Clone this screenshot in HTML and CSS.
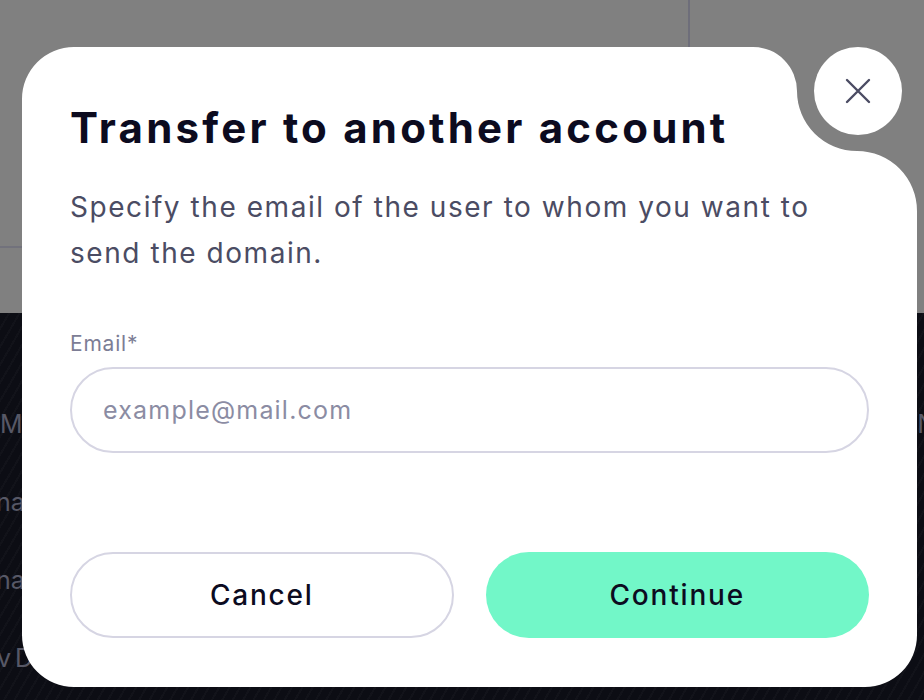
FILE: index.html
```html
<!DOCTYPE html>
<html lang="en">
<head>
<meta charset="utf-8">
<title>Transfer to another account</title>
<link rel="stylesheet" href="styles.css">
</head>
<body>
<div class="page">
  <div class="page-top">
    <div class="cell cell-a"></div>
    <div class="cell cell-b"></div>
    <div class="cell"></div>
    <div class="cell"></div>
  </div>
  <div class="page-bottom">
    <div class="side-row"><span class="side-text">MA</span><span class="side-text shift-n">N</span></div>
    <div class="side-row"><span class="side-text shift-na">na</span></div>
    <div class="side-row"><span class="side-text shift-na">na</span></div>
    <div class="side-row"><span class="side-text shift-vd">v D</span></div>
  </div>

  <div class="modal-wrap">
    <div class="modal">
      <h1 class="title">Transfer to another account</h1>
      <p class="desc">Specify the email of the user to whom you want to send the domain.</p>
      <label class="field">
        <span class="label">Email*</span>
        <input class="input" type="email" placeholder="example@mail.com">
      </label>
      <div class="actions">
        <button class="btn btn-cancel" type="button">Cancel</button>
        <button class="btn btn-continue" type="button">Continue</button>
      </div>
    </div>
    <button class="close" type="button" aria-label="Close">
      <svg width="26" height="26" viewBox="0 0 26 26" fill="none" stroke="#4b4c63" stroke-width="2.4" stroke-linecap="round">
        <path d="M2 2L24 24M24 2L2 24"/>
      </svg>
    </button>
  </div>
</div>
</body>
</html>
```

FILE: styles.css
```css
* { box-sizing: border-box; }

html, body {
  margin: 0;
  padding: 0;
  width: 924px;
  height: 700px;
  overflow: hidden;
  font-family: "Inter", "Noto Sans", "Liberation Sans", sans-serif;
}

.page {
  position: relative;
  width: 924px;
  height: 700px;
  display: flex;
  flex-direction: column;
  background: #0c0d14;
  overflow: hidden;
}

.page-top {
  height: 313px;
  flex: none;
  background: #808080;
  display: grid;
  grid-template-columns: 688px 1fr;
  grid-template-rows: 248px 1fr;
}

.cell-a { border-bottom: 2px solid #72727c; }
.cell-b { border-left: 2px solid #6e6e7a; }

.page-bottom {
  flex: 1;
  display: flex;
  flex-direction: column;
  gap: 54px;
  padding-top: 99px;
  background:
    repeating-linear-gradient(120deg, rgba(255,255,255,0) 0 7px, rgba(255,255,255,0.025) 7px 9px),
    #0c0d14;
}

.side-row {
  display: flex;
  justify-content: space-between;
  height: 24px;
}

.side-text {
  font-size: 25px;
  line-height: 24px;
  color: #575866;
  white-space: nowrap;
}

.shift-na { margin-left: -4px; }
.shift-vd { margin-left: -3px; word-spacing: -3px; }
.shift-n { margin-right: -12px; }

.modal-wrap {
  position: absolute;
  left: 22px;
  top: 47px;
  width: 895px;
  height: 640px;
}

.modal {
  width: 100%;
  height: 100%;
  background: #ffffff;
  clip-path: path("M 0 52 A 52 52 0 0 1 52 0 H 731 A 44 44 0 0 1 775 44 A 60 60 0 0 0 835 104 A 60 60 0 0 1 895 164 V 588 A 52 52 0 0 1 843 640 H 52 A 52 52 0 0 1 0 588 Z");
  padding: 56px 48px 49px;
  display: flex;
  flex-direction: column;
}

.title {
  margin: 0;
  font-size: 42px;
  line-height: 50px;
  font-weight: 700;
  color: #0c0b1f;
  letter-spacing: 3.2px;
  white-space: nowrap;
}

.desc {
  margin: 31px 0 0;
  font-size: 28px;
  line-height: 46px;
  font-weight: 400;
  color: #4b4c63;
  letter-spacing: 1.55px;
}

.field {
  margin-top: 55px;
  display: flex;
  flex-direction: column;
  gap: 10px;
}

.label {
  font-size: 21px;
  line-height: 26px;
  color: #7c7d95;
  letter-spacing: 0.8px;
}

.input {
  width: 100%;
  height: 86px;
  border: 2px solid #d6d5e3;
  border-radius: 43px;
  padding: 0 31px;
  font-family: inherit;
  font-size: 25px;
  letter-spacing: 1.2px;
  color: #0c0b1f;
  background: #fff;
  outline: none;
}

.input::placeholder { color: #8b8ca3; }

.actions {
  margin-top: auto;
  display: grid;
  grid-template-columns: 1fr 1fr;
  gap: 32px;
}

.btn {
  height: 86px;
  border-radius: 43px;
  font-family: inherit;
  font-size: 28px;
  font-weight: 500;
  letter-spacing: 1.8px;
  color: #0c0b1f;
  cursor: pointer;
}

.btn-cancel {
  background: #fff;
  border: 2px solid #d6d5e3;
}

.btn-continue {
  background: #72f7c8;
  border: none;
}

.close {
  position: absolute;
  left: 792px;
  top: 0;
  width: 88px;
  height: 88px;
  border-radius: 50%;
  border: none;
  background: #fff;
  padding: 0;
  display: flex;
  align-items: center;
  justify-content: center;
  cursor: pointer;
}
```
